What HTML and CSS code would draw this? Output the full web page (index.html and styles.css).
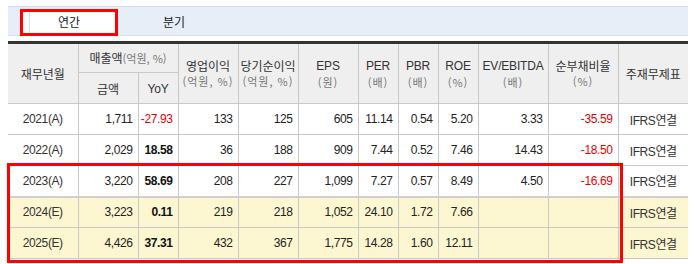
FILE: index.html
```html
<!DOCTYPE html>
<html lang="ko">
<head>
<meta charset="utf-8">
<link rel="stylesheet" href="styles.css">
</head>
<body>
<div class="page">
  <div class="tabs">
    <div class="tab active"><span class="tab-line"></span>연간</div>
    <div class="tab">분기</div>
  </div>
  <table class="fin">
    <colgroup>
      <col style="width:70px"><col style="width:60px"><col style="width:40px"><col style="width:60px"><col style="width:60px"><col style="width:60px"><col style="width:40px"><col style="width:40px"><col style="width:40px"><col style="width:70px"><col style="width:70px"><col style="width:70px">
    </colgroup>
    <thead>
      <tr class="h1">
        <th rowspan="2">재무년월</th>
        <th colspan="2">매출액<span class="unit-in">(억원, %)</span></th>
        <th rowspan="2">영업이익<br><span class="unit">(억원, %)</span></th>
        <th rowspan="2">당기순이익<br><span class="unit">(억원, %)</span></th>
        <th rowspan="2"><span class="en">EPS</span><br><span class="unit">(원)</span></th>
        <th rowspan="2"><span class="en">PER</span><br><span class="unit">(배)</span></th>
        <th rowspan="2"><span class="en">PBR</span><br><span class="unit">(배)</span></th>
        <th rowspan="2"><span class="en">ROE</span><br><span class="unit">(%)</span></th>
        <th rowspan="2"><span class="en">EV/EBITDA</span><br><span class="unit">(배)</span></th>
        <th rowspan="2">순부채비율<br><span class="unit">(%)</span></th>
        <th rowspan="2">주재무제표</th>
      </tr>
      <tr class="h2">
        <th>금액</th>
        <th><span class="en">YoY</span></th>
      </tr>
    </thead>
    <tbody>
      <tr>
        <td class="c">2021(A)</td><td>1,711</td><td class="neg">-27.93</td><td>133</td><td>125</td><td>605</td><td>11.14</td><td>0.54</td><td>5.20</td><td>3.33</td><td class="neg">-35.59</td><td class="c ifrs">IFRS연결</td>
      </tr>
      <tr>
        <td class="c">2022(A)</td><td>2,029</td><td class="b">18.58</td><td>36</td><td>188</td><td>909</td><td>7.44</td><td>0.52</td><td>7.46</td><td>14.43</td><td class="neg">-18.50</td><td class="c ifrs">IFRS연결</td>
      </tr>
      <tr>
        <td class="c">2023(A)</td><td>3,220</td><td class="b">58.69</td><td>208</td><td>227</td><td>1,099</td><td>7.27</td><td>0.57</td><td>8.49</td><td>4.50</td><td class="neg">-16.69</td><td class="c ifrs">IFRS연결</td>
      </tr>
      <tr class="est first-est">
        <td class="c">2024(E)</td><td>3,223</td><td class="b">0.11</td><td>219</td><td>218</td><td>1,052</td><td>24.10</td><td>1.72</td><td>7.66</td><td></td><td></td><td class="c ifrs">IFRS연결</td>
      </tr>
      <tr class="est">
        <td class="c">2025(E)</td><td>4,426</td><td class="b">37.31</td><td>432</td><td>367</td><td>1,775</td><td>14.28</td><td>1.60</td><td>12.11</td><td></td><td></td><td class="c ifrs">IFRS연결</td>
      </tr>
    </tbody>
  </table>
  <div class="mark"></div>
</div>
</body>
</html>
```

FILE: styles.css
```css
* { box-sizing: border-box; }
html, body { margin: 0; padding: 0; background: #fff; }
body {
  font-family: "Noto Sans CJK KR", "Liberation Sans", sans-serif;
  color: #333;
}
.page {
  position: relative;
  width: 695px;
  height: 264px;
  padding: 6px 7px 0 8px;
  overflow: hidden;
}
.tabs {
  display: flex;
  height: 30px;
  border-top: 1px solid #d7dee9;
  border-bottom: 1px solid #d7dee9;
  background: #e8eef8;
  padding-left: 12px;
  align-items: flex-start;
}
.tab {
  font-size: 12px;
  line-height: 20px;
  text-align: center;
  color: #222;
}
.tab.active {
  position: relative;
  width: 98px;
  height: 27px;
  margin-top: 2px;
  background: #fff;
  border: 3px solid #ff0000;
  line-height: 20px;
}
.tab-line {
  position: absolute;
  left: 6px;
  top: 0;
  bottom: 0;
  width: 1px;
  background: #d9dee6;
}
.tab:not(.active) {
  width: 112px;
  margin-top: 5px;
}
.fin {
  margin-top: 5px;
  width: 680px;
  table-layout: fixed;
  border-collapse: collapse;
  border-top: 3px solid #333;
}
.fin th {
  background: #efefef;
  font-weight: normal;
  font-size: 12px;
  line-height: 15px;
  color: #333;
  border: 1px solid #c9c9c9;
  padding: 0;
  text-align: center;
  vertical-align: middle;
}
.fin th:first-child { border-left: none; }
.fin th:last-child { border-right: none; }
.fin tr.h1 { height: 30px; }
.fin tr.h2 { height: 31px; }
.unit {
  font-size: 11px;
  color: #777;
  letter-spacing: 1px;
}
.unit-in {
  font-size: 11px;
  color: #777;
}
.en, .fin td {
  font-family: "Liberation Sans", sans-serif;
}
.en { font-size: 12px; color: #333; letter-spacing: -0.2px; }
.fin td {
  font-size: 12px;
  letter-spacing: -0.4px;
  height: 31px;
  padding: 0 5px 0 0;
  text-align: right;
  vertical-align: middle;
  border: 1px solid #c9c9c9;
  color: #222;
}
.fin td:first-child { border-left: none; }
.fin td:last-child { border-right: none; }
.fin td.c { text-align: center; padding: 0; color: #333; }
.fin td.ifrs { font-family: "Liberation Sans", "Noto Sans CJK KR", sans-serif; font-size: 12px; }
.fin td.neg { color: #e60000; }
.fin td.b { font-weight: bold; color: #111; }
.fin tr.est td { background: #fcf6d1; }
.fin tr.first-est td { border-top: 2px solid #cfcfcf; }
.mark {
  position: absolute;
  left: 7px;
  top: 163px;
  width: 616px;
  height: 100px;
  border: 3px solid #ff0000;
  pointer-events: none;
}
```
